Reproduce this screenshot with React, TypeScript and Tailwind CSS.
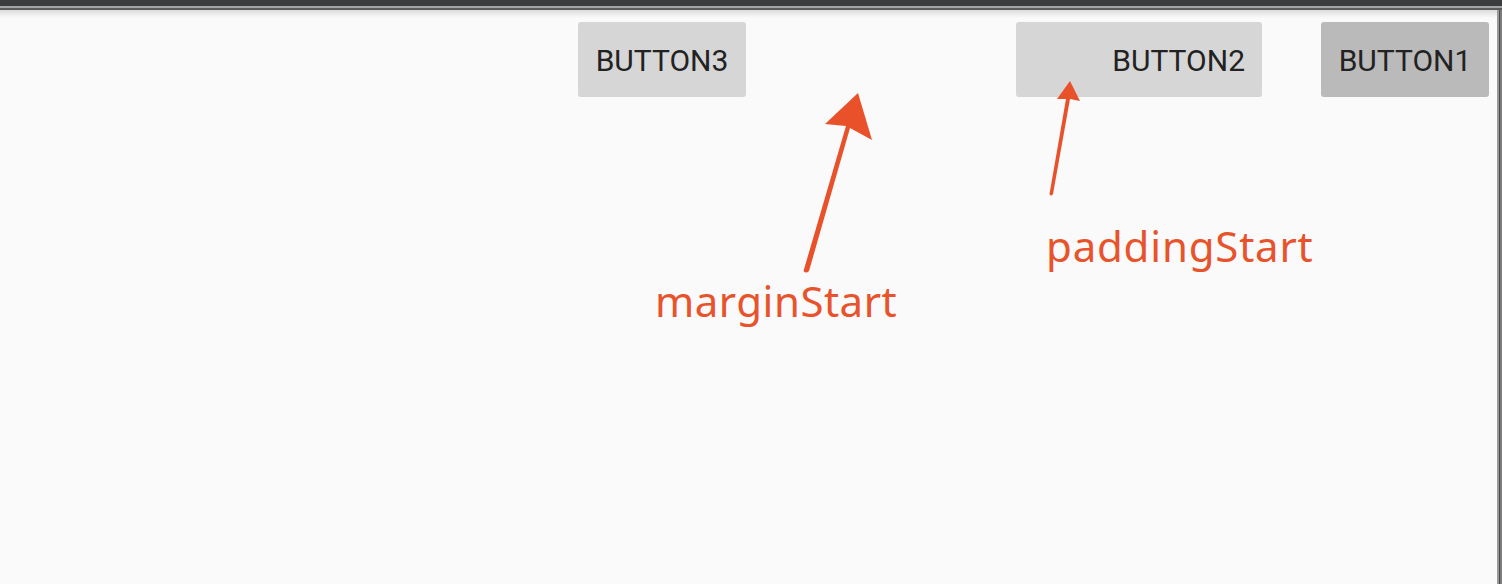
import React from "react";

const btnText = "font-['Roboto','Liberation_Sans',sans-serif] text-[30px] text-[#222222] leading-none pt-[3px]";

export default function App() {
  return (
    <div className="relative w-[1502px] h-[584px] overflow-hidden bg-[#fafafa] flex flex-col">
      {/* top window chrome */}
      <div className="h-[6px] bg-[#3b3c3e] shrink-0" />
      <div className="h-[2px] bg-[#a3a3a3] shrink-0" />
      <div className="h-[2px] bg-[#5b5b5b] shrink-0" />
      <div className="flex-1 flex min-h-0">
        <div className="flex-1 flex flex-col bg-[#fafafa]">
          <div className="h-[8px] bg-gradient-to-b from-[#dcdcdc] to-[#fafafa] shrink-0" />
          <div className="flex justify-end pt-[4px] pr-[8px]">
            <div className={`h-[75px] w-[168px] rounded-[3px] bg-[#d6d6d6] flex items-center justify-center ${btnText}`}>
              BUTTON3
            </div>
            <div className={`ml-[270px] h-[75px] w-[246px] rounded-[3px] bg-[#d6d6d6] flex items-center justify-end pr-[17px] ${btnText}`}>
              BUTTON2
            </div>
            <div className={`ml-[59px] h-[75px] w-[168px] rounded-[3px] bg-[#bababa] flex items-center justify-center ${btnText}`}>
              BUTTON1
            </div>
          </div>
        </div>
        <div className="w-[2px] bg-[#9a9a9a]" />
        <div className="w-[1px] bg-[#4a4a4a]" />
        <div className="w-[2px] bg-[#7c7c7c]" />
      </div>

      {/* annotations */}
      <svg className="absolute left-0 top-0" width="1502" height="584" viewBox="0 0 1502 584">
        <path d="M803.5 271 Q806 274 809 271 L850 128 L872 140 L858 93 L825 124 L846 126 Z" fill="#e8512a" />
        <path d="M1049.5 194 Q1051 197 1053 194 L1070 99 L1080 101 L1070 81 L1057 99 L1066 99 Z" fill="#e8512a" />
      </svg>
      <div className="absolute left-[655px] top-[275px] font-['Noto_Sans','Open_Sans',sans-serif] text-[42px] leading-[52px] tracking-[0.5px] text-[#e8532b]">
        marginStart
      </div>
      <div className="absolute left-[1046px] top-[220px] font-['Noto_Sans','Open_Sans',sans-serif] text-[42px] leading-[52px] tracking-[0.8px] text-[#e8532b]">
        paddingStart
      </div>
    </div>
  );
}
